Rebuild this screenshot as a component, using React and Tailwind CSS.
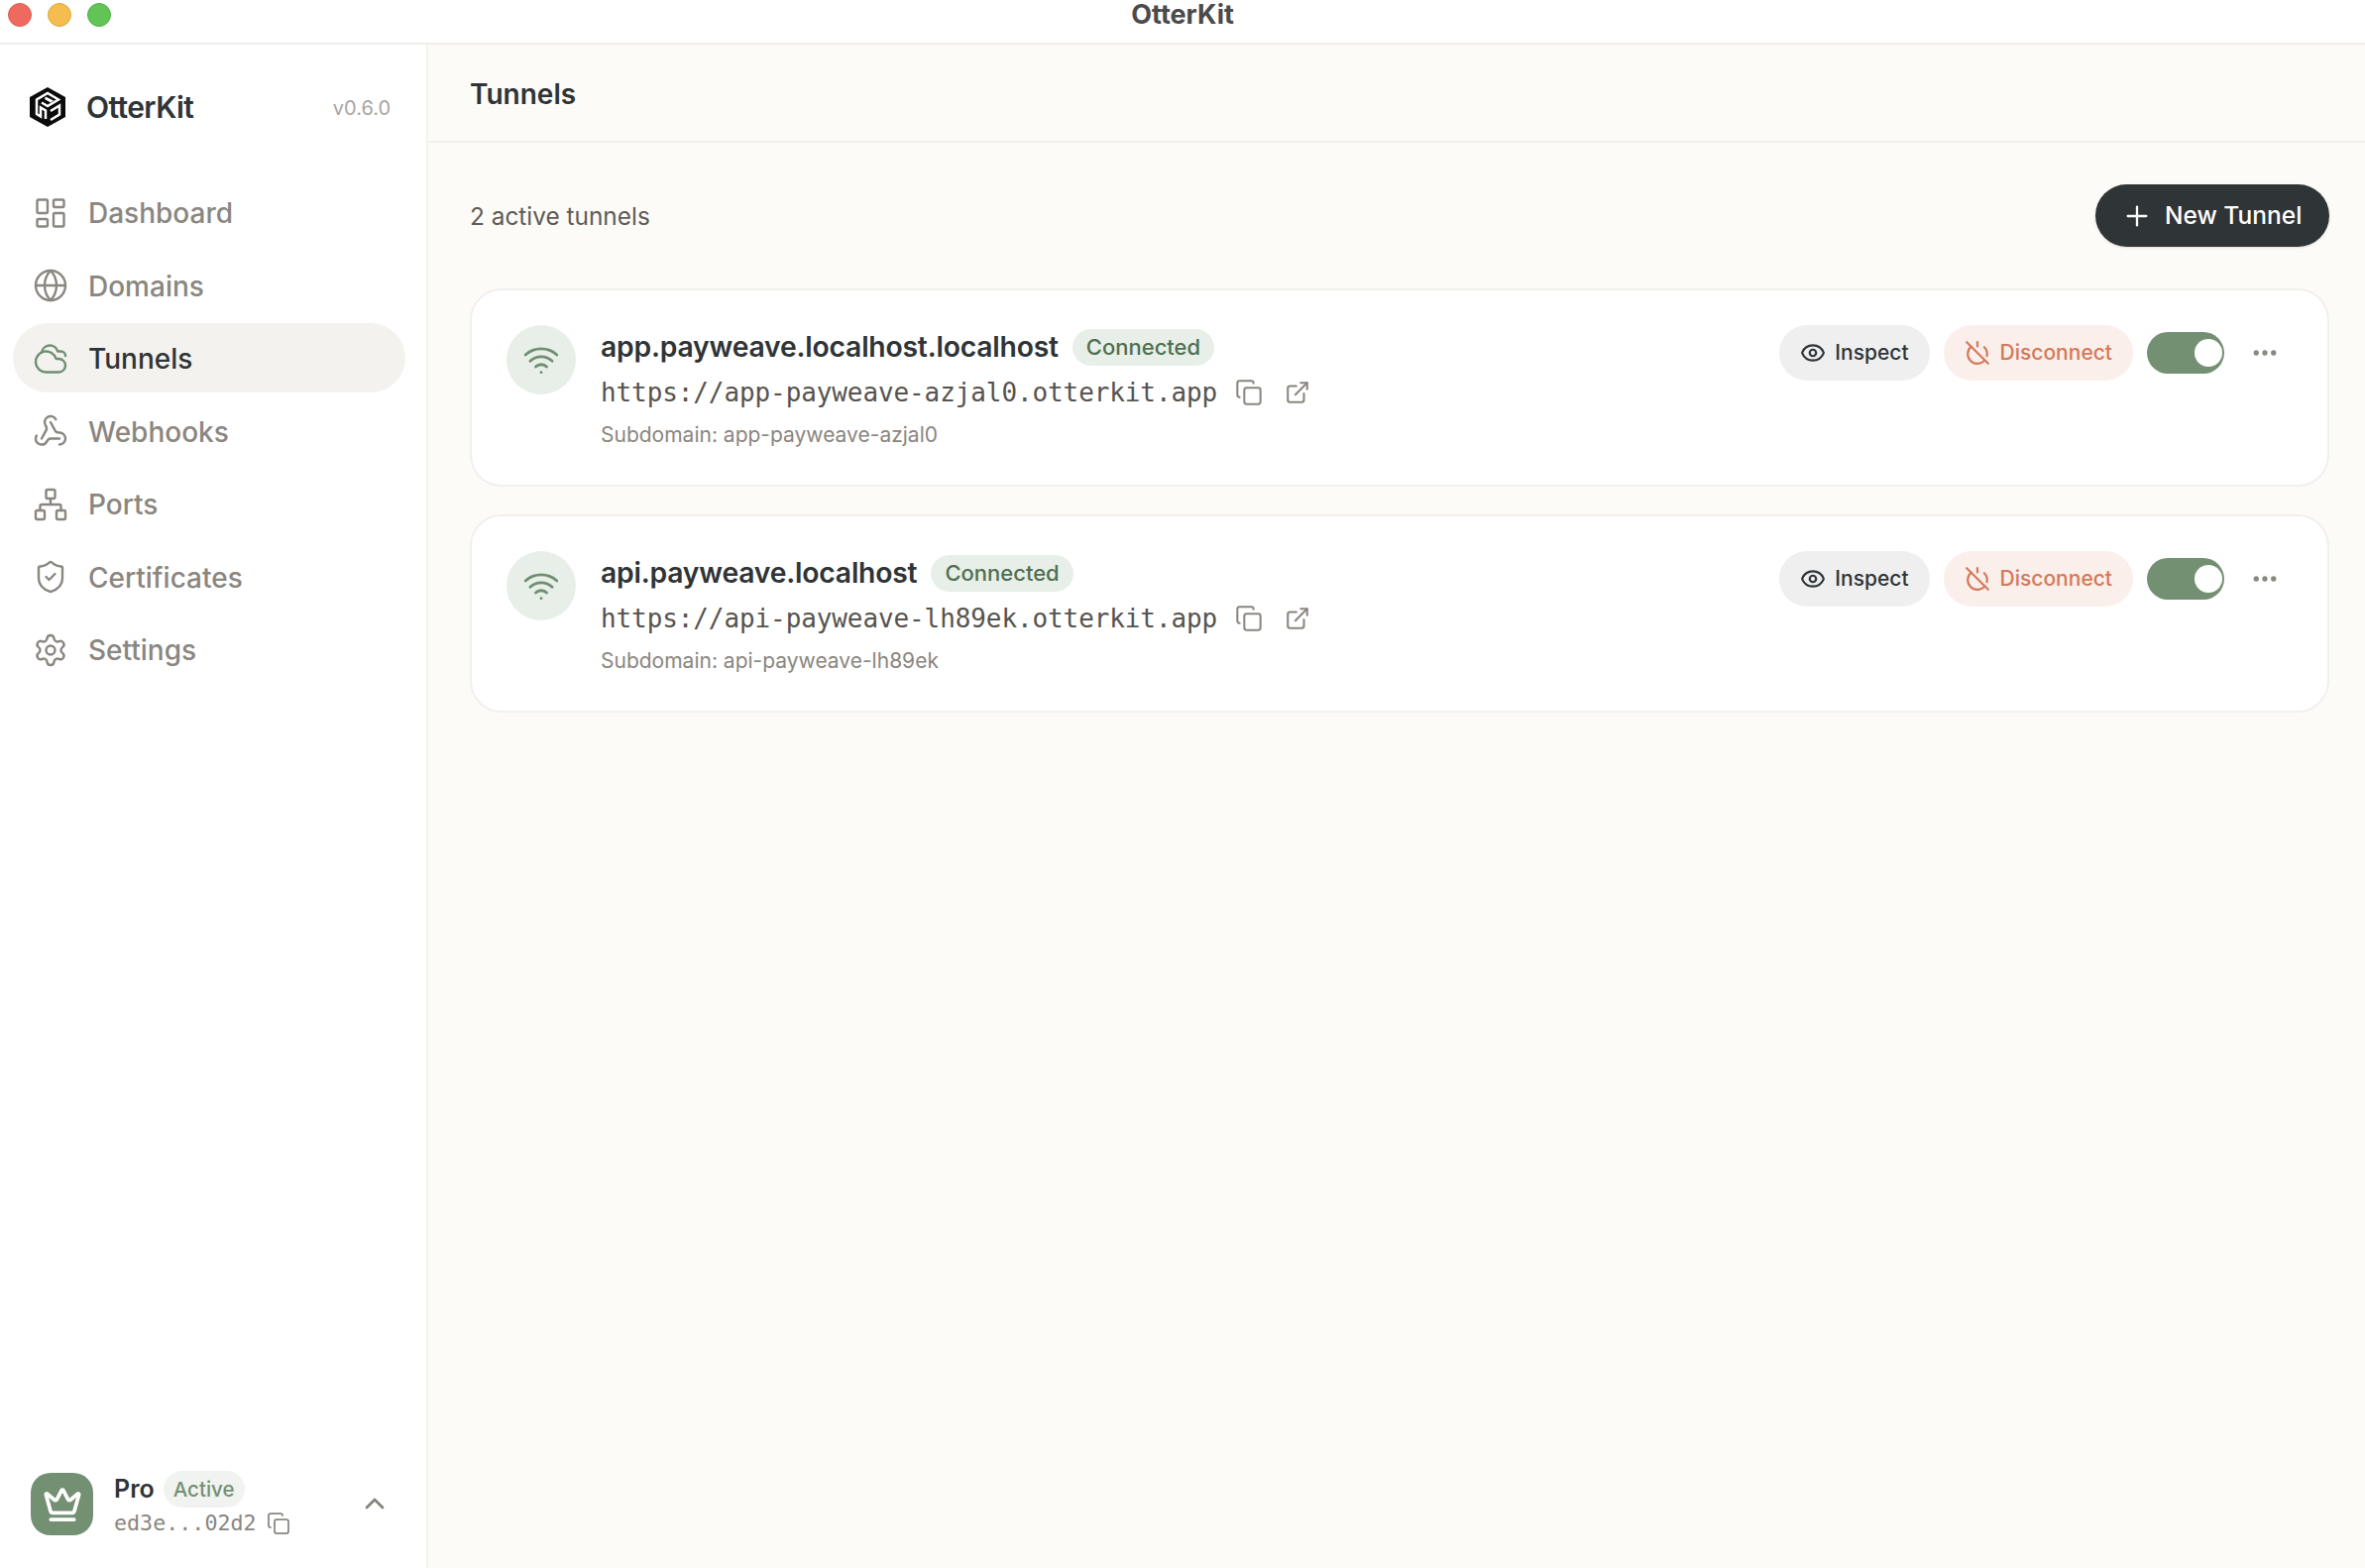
import React from "react";
import {
  LayoutDashboard,
  Globe,
  Cloudy,
  Webhook,
  Network,
  ShieldCheck,
  Settings,
  Crown,
  Copy,
  ExternalLink,
  Plus,
  Eye,
  Wifi,
  PowerOff,
  Ellipsis,
  ChevronUp,
} from "lucide-react";

const navItems = [
  { label: "Dashboard", icon: LayoutDashboard },
  { label: "Domains", icon: Globe },
  { label: "Tunnels", icon: Cloudy, active: true },
  { label: "Webhooks", icon: Webhook },
  { label: "Ports", icon: Network },
  { label: "Certificates", icon: ShieldCheck },
  { label: "Settings", icon: Settings },
];

const tunnels = [
  {
    name: "app.payweave.localhost.localhost",
    url: "https://app-payweave-azjal0.otterkit.app",
    subdomain: "app-payweave-azjal0",
  },
  {
    name: "api.payweave.localhost",
    url: "https://api-payweave-lh89ek.otterkit.app",
    subdomain: "api-payweave-lh89ek",
  },
];

const Logo = () => (
  <svg viewBox="0 0 36 40" className="w-[36px] h-[40px] shrink-0">
    <path fill="#0b0b0b" d="M18 0 36 10V30L18 40 0 30V10Z" />
    <path
      fill="none"
      stroke="#fff"
      strokeWidth="2.5"
      d="M7 18V12.5L18 6 29 12.5 18 19 12 15.5M7 18V27L11 29.5V20.5L16 23.5V32M21 24 30 18.5V27.5L21 33"
    />
    <path fill="#fff" d="M16 9.5 24 13.5 21 15.5 15 12Z" />
  </svg>
);

const TunnelCard = ({ tunnel }) => (
  <div className="flex justify-between bg-white border-2 border-[#f1f0ee] rounded-[32px] h-[200px] pl-[35px] pr-[48px] pt-[35px]">
    <div className="flex gap-[25px]">
      <div className="w-[70px] h-[70px] shrink-0 rounded-full bg-[#e8efe8] flex items-center justify-center text-[#6f8f72]">
        <Wifi size={38} strokeWidth={1.75} />
      </div>
      <div className="mt-[2px]">
        <div className="flex items-center gap-[14px] h-[40px]">
          <span className="text-[28.3px] leading-[40px] font-semibold text-[#2f3437] tracking-[-0.2px]">
            {tunnel.name}
          </span>
          <span className="h-[37px] px-[14px] rounded-full bg-[#e8efe8] text-[#4f6f52] text-[22px] font-medium leading-[37px]">
            Connected
          </span>
        </div>
        <div className="flex items-center mt-[6px] h-[40px] text-[#8a8680]">
          <span className="font-['DejaVu_Sans_Mono',monospace] text-[26px] text-[#57534e] tracking-[-0.1px]">
            {tunnel.url}
          </span>
          <Copy size={28} strokeWidth={1.75} className="ml-[18px]" />
          <ExternalLink size={26} strokeWidth={1.9} className="ml-[22px]" />
        </div>
        <div className="mt-[9px] text-[21px] leading-[28px] text-[#8a8680]">
          Subdomain: {tunnel.subdomain}
        </div>
      </div>
    </div>
    <div className="flex items-start">
      <button className="flex items-center gap-[9px] h-[56px] px-[21px] rounded-[28px] bg-[#efefef] text-[#2f3437] text-[21px] font-medium">
        <Eye size={26} strokeWidth={2} />
        Inspect
      </button>
      <button className="flex items-center gap-[10px] h-[56px] px-[21px] ml-[14px] rounded-[28px] bg-[#fbefeb] text-[#d4795a] text-[21px] font-medium">
        <PowerOff size={26} strokeWidth={2} />
        Disconnect
      </button>
      <div className="flex items-center justify-end w-[78px] h-[42px] mt-[7px] ml-[14px] rounded-full bg-[#739073] pr-[2px]">
        <div className="w-[28px] h-[28px] rounded-full bg-white" />
      </div>
      <Ellipsis size={30} strokeWidth={2.25} className="ml-[26px] mt-[13px] text-[#8a8680]" />
    </div>
  </div>
);

export default function App() {
  return (
    <div className="w-[2386px] h-[1582px] flex flex-col overflow-hidden bg-white font-['Inter',sans-serif]">
      <div className="relative h-[45px] shrink-0 flex items-start pt-[3px] gap-[16px] pl-[8px] bg-white border-b-2 border-[#efeeeb]">
        <span className="w-[24px] h-[24px] rounded-full bg-[#ee6a5f] border border-[#dc5c52]" />
        <span className="w-[24px] h-[24px] rounded-full bg-[#f5bd4f] border border-[#dfa93f]" />
        <span className="w-[24px] h-[24px] rounded-full bg-[#61c454] border border-[#52b045]" />
        <span className="absolute left-0 right-0 top-0 h-[30px] text-center text-[27px] leading-[30px] font-bold text-[#4b4b4b]">
          OtterKit
        </span>
      </div>
      <div className="flex flex-1 min-h-0">
        <aside className="w-[432px] shrink-0 flex flex-col bg-white border-r-2 border-[#f4f3f0]">
          <div className="flex items-center justify-between h-[126px] pl-[30px] pr-[36px]">
            <div className="flex items-center gap-[21px]">
              <Logo />
              <span className="text-[30px] font-semibold text-[#2f3437] tracking-[-0.6px]">OtterKit</span>
            </div>
            <span className="text-[20px] text-[#a8a5a0] mt-[2px]">v0.6.0</span>
          </div>
          <nav className="flex flex-col gap-[3.5px] pl-[13px] pr-[21px] mt-[8px]">
            {navItems.map((item) => {
              const Icon = item.icon;
              return (
                <div
                  key={item.label}
                  className={
                    item.active
                      ? "flex items-center gap-[20px] h-[70px] pl-[20px] rounded-full bg-[#f3f2ee] text-[#2f3437]"
                      : "flex items-center gap-[20px] h-[70px] pl-[20px] rounded-full text-[#8a8680]"
                  }
                >
                  <Icon size={36} strokeWidth={1.6} className={item.active ? "text-[#6f8f72] mt-[1px]" : "text-[#8a8680] mt-[1px]"} />
                  <span className="text-[28px] font-medium mt-[2px]">{item.label}</span>
                </div>
              );
            })}
          </nav>
          <div className="mt-auto flex items-center h-[63px] mb-[33px] pl-[31px] pr-[36px]">
            <div className="w-[63px] h-[63px] rounded-[20px] bg-[#739073] flex items-center justify-center text-white">
              <Crown size={40} strokeWidth={2.25} />
            </div>
            <div className="ml-[21px]">
              <div className="flex items-center gap-[9px] h-[37px]">
                <span className="text-[25px] font-semibold text-[#2f3437]">Pro</span>
                <span className="h-[37px] px-[10px] rounded-full bg-[#f0f3f0] text-[#739073] text-[20.5px] font-medium leading-[37px]">
                  Active
                </span>
              </div>
              <div className="flex items-center gap-[10px] text-[#8a8680] mt-[2px]">
                <span className="font-['DejaVu_Sans_Mono',monospace] text-[21.7px] leading-[28px]">ed3e...02d2</span>
                <Copy size={24} strokeWidth={1.75} />
              </div>
            </div>
            <ChevronUp size={32} strokeWidth={2} className="ml-auto -mt-[2px] text-[#85817b]" />
          </div>
        </aside>
        <main className="flex-1 min-w-0 bg-[#fcfbf8]">
          <div className="h-[99px] flex items-center pl-[42px] border-b-2 border-[#f1f0ec]">
            <h1 className="text-[28px] font-semibold text-[#2f3437] mt-[2px]">Tunnels</h1>
          </div>
          <div className="pl-[42px] pr-[36px]">
            <div className="flex items-center justify-between mt-[42px] h-[63px]">
              <span className="text-[24.4px] text-[#5f5b56] mt-[2px]">2 active tunnels</span>
              <button className="flex items-center gap-[12px] h-[63px] w-[236px] pl-[26px] rounded-full bg-[#2f3437] text-white text-[24.5px] font-medium shadow-sm">
                <Plus size={32} strokeWidth={1.75} />
                New Tunnel
              </button>
            </div>
            <div className="flex flex-col gap-[28px] mt-[42px]">
              {tunnels.map((tunnel) => (
                <TunnelCard key={tunnel.name} tunnel={tunnel} />
              ))}
            </div>
          </div>
        </main>
      </div>
    </div>
  );
}
